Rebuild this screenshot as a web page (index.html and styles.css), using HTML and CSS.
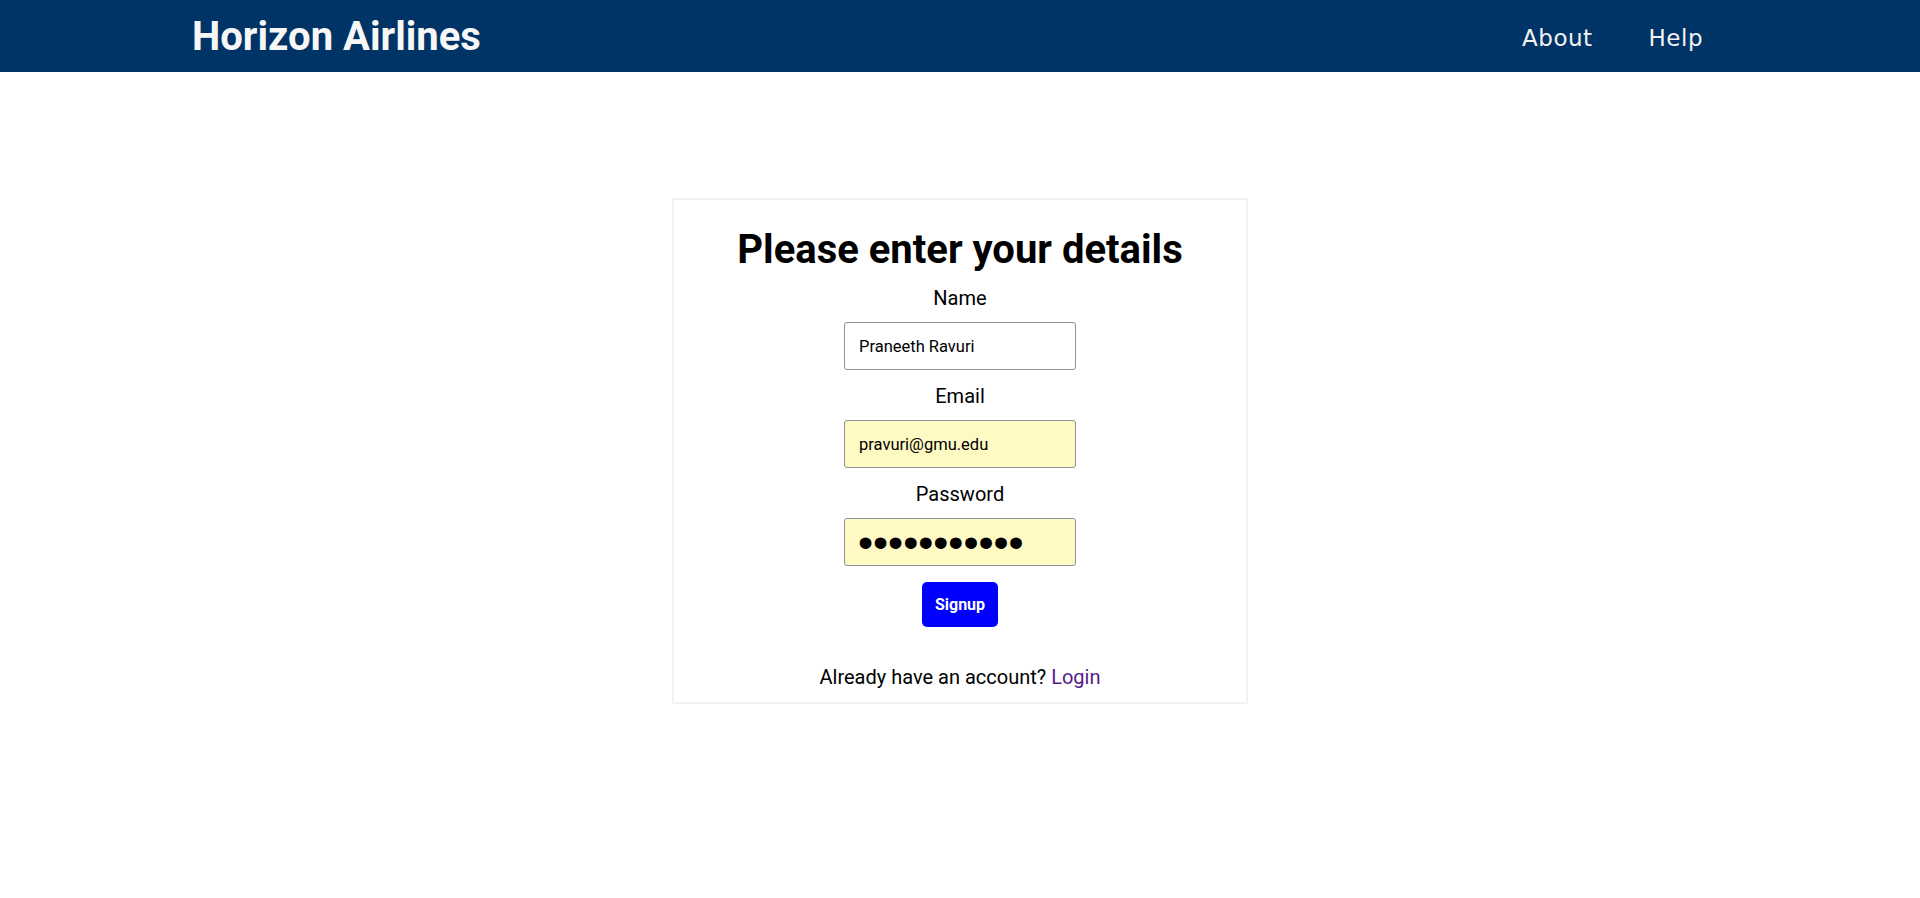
FILE: index.html
```html
<!DOCTYPE html>
<html lang="en">
<head>
<meta charset="utf-8">
<title>Horizon Airlines - Signup</title>
<link rel="stylesheet" href="styles.css">
</head>
<body>
<header class="topbar">
  <div class="brand">Horizon Airlines</div>
  <nav class="nav">
    <a class="nav-link" href="#">About</a>
    <a class="nav-link" href="#">Help</a>
  </nav>
</header>
<main class="page">
  <form class="card">
    <h1 class="card-title">Please enter your details</h1>
    <label class="field-label" for="name">Name</label>
    <input class="field" id="name" type="text" value="Praneeth Ravuri">
    <label class="field-label" for="email">Email</label>
    <input class="field field-filled" id="email" type="email" value="pravuri@gmu.edu">
    <label class="field-label" for="password">Password</label>
    <input class="field field-filled field-secret" id="password" type="password" value="abcdefghijk">
    <button class="btn" type="button">Signup</button>
    <p class="footnote">Already have an account? <a class="login-link" href="#">Login</a></p>
  </form>
</main>
</body>
</html>
```
FILE: styles.css
```css
* { box-sizing: border-box; }
html, body { margin: 0; padding: 0; background: #fff; }
body {
  font-family: Roboto, "Liberation Sans", Arial, sans-serif;
  color: #000;
}
.topbar {
  height: 72px;
  background: #003366;
  display: flex;
  align-items: center;
  justify-content: space-between;
  padding: 0 217px 0 192px;
}
.brand {
  font-family: Roboto, "Liberation Sans", sans-serif;
  font-weight: 700;
  font-size: 40px;
  line-height: 47px;
  color: #f7f7f7;
}
.nav {
  display: flex;
  gap: 56px;
  padding-top: 4px;
}
.nav-link {
  font-family: "DejaVu Sans", "Open Sans", sans-serif;
  font-size: 23px;
  letter-spacing: 0.5px;
  color: #f2f2f2;
  text-decoration: none;
}
.page {
  display: flex;
  justify-content: center;
  padding-top: 126px;
}
.card {
  width: 576px;
  border: 2px solid #f2f2f2;
  display: flex;
  flex-direction: column;
  align-items: center;
  padding: 0 0 14px;
}
.card-title {
  font-size: 40px;
  font-weight: 700;
  line-height: 47px;
  margin: 26px 0 15px;
}
.field-label {
  font-size: 20px;
  line-height: 21px;
  margin-bottom: 13px;
}
.field {
  width: 232px;
  height: 48px;
  border: 1px solid #8f8f9d;
  border-radius: 3px;
  padding: 0 14px;
  font-family: Roboto, "Liberation Sans", sans-serif;
  font-size: 16.5px;
  color: #000;
  background: #fff;
  margin: 0 0 16px;
  outline: none;
}
.field-filled { background: #fff9c4; }
.field-secret {
  font-family: "Liberation Sans", sans-serif;
  font-size: 43px;
  line-height: 1;
  padding: 0 13px;
}
.btn {
  height: 45px;
  padding: 0 13px;
  background: #0000ff;
  color: #fff;
  border: none;
  border-radius: 5px;
  font-family: Roboto, "Liberation Sans", sans-serif;
  font-weight: 700;
  font-size: 16px;
}
.footnote {
  font-size: 20px;
  line-height: 21px;
  margin: 40px 0 0;
}
.login-link {
  color: #551a8b;
  text-decoration: none;
}
```
